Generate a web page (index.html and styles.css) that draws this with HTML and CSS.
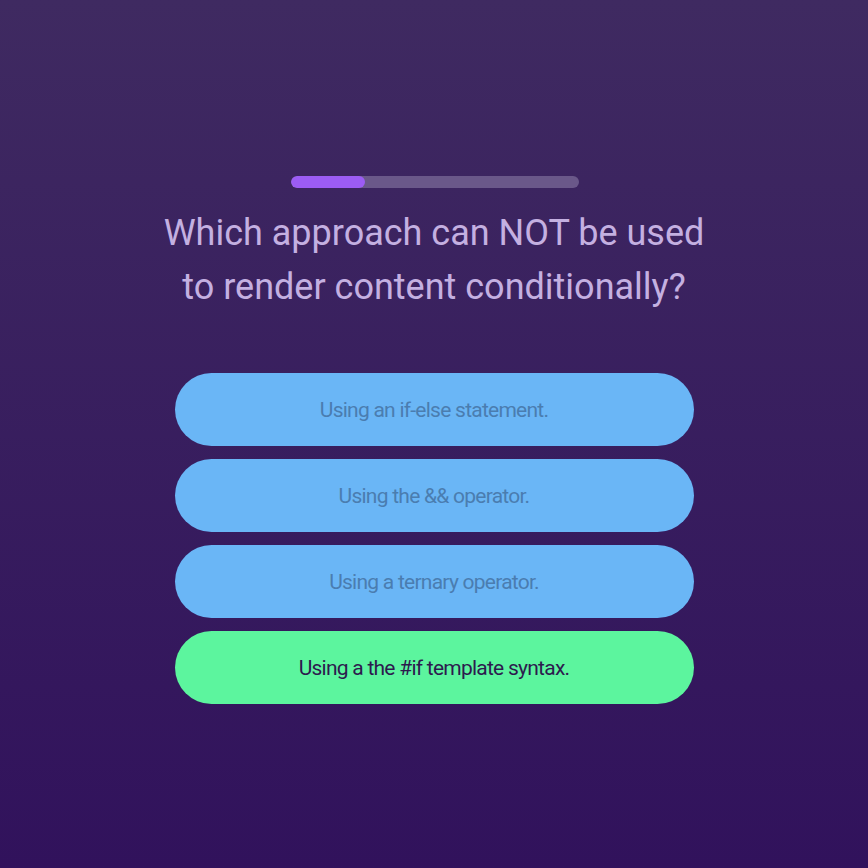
FILE: index.html
```html
<!DOCTYPE html>
<html>
<head>
<meta charset="utf-8">
<link rel="stylesheet" href="styles.css">
</head>
<body>
<main class="quiz">
  <div class="progress"><div class="progress-fill" style="width:25.7%"></div></div>
  <h1 class="question">Which approach can NOT be used<br>to render content conditionally?</h1>
  <div class="answers">
    <button class="answer">Using an if-else statement.</button>
    <button class="answer">Using the &amp;&amp; operator.</button>
    <button class="answer">Using a ternary operator.</button>
    <button class="answer selected">Using a the #if template syntax.</button>
  </div>
</main>
</body>
</html>
```
FILE: styles.css
```css
html, body {
  margin: 0;
  height: 100%;
}
body {
  background: linear-gradient(180deg, #3f2a61 0%, #31125c 100%);
  font-family: Roboto, "Noto Sans", sans-serif;
}
.quiz {
  display: flex;
  flex-direction: column;
  align-items: center;
  padding-top: 176px;
}
.progress {
  width: 288px;
  height: 12px;
  border-radius: 6px;
  background: #6a5889;
  overflow: hidden;
  margin-left: 2px;
}
.progress-fill {
  height: 100%;
  background: #9c5cf4;
  border-radius: 6px;
}
.question {
  margin: 18px 0 0;
  font-weight: 400;
  font-size: 36px;
  line-height: 54px;
  color: #c4b0e1;
  text-align: center;
}
.answers {
  margin-top: 59px;
  display: flex;
  flex-direction: column;
  gap: 13px;
}
.answer {
  width: 519px;
  height: 73px;
  border: none;
  border-radius: 37px;
  background: #6ab6f6;
  color: #4a7db0;
  font-family: Roboto, sans-serif;
  font-size: 21px;
  letter-spacing: -0.75px;
  cursor: pointer;
}
.answer.selected {
  background: #5cf59e;
  color: #2d1b4e;
}
```
